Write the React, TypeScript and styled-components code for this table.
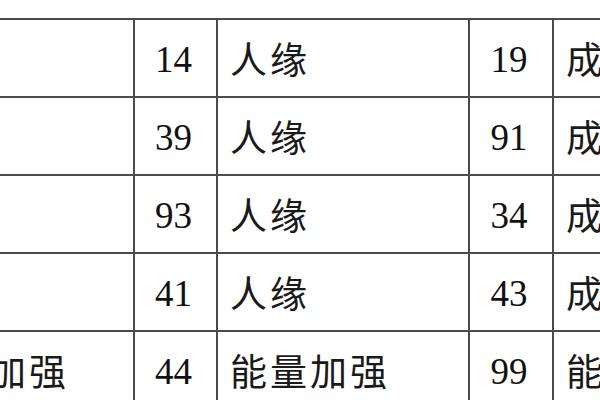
import React from "react";
import styled, { createGlobalStyle } from "styled-components";

const Global = createGlobalStyle`
  html, body {
    margin: 0;
    padding: 0;
    background: #ffffff;
    overflow: hidden;
    width: 600px;
    height: 400px;
  }
`;

const Page = styled.div`
  width: 600px;
  height: 400px;
  overflow: hidden;
  background: #ffffff;
  padding-top: 18px;
  box-sizing: border-box;
`;

const Table = styled.table`
  border-collapse: collapse;
  margin-left: -111px;
  table-layout: fixed;
`;

const Cell = styled.td<{ $w: number; $num?: boolean; $lead?: boolean }>`
  width: ${(p) => p.$w}px;
  min-width: ${(p) => p.$w}px;
  max-width: ${(p) => p.$w}px;
  height: 74px;
  border: 2px solid #4a4a4a;
  padding: ${(p) => (p.$num ? "2px 4px 0 0" : p.$lead ? "0 0 0 18px" : "0 0 0 12px")};
  box-sizing: border-box;
  text-align: ${(p) => (p.$num ? "center" : "left")};
  vertical-align: middle;
  white-space: nowrap;
  overflow: hidden;
  color: ${(p) => (p.$num ? "#111" : "#1a1a1a")};
  font-family: ${(p) =>
    p.$num
      ? '"Liberation Serif", "Noto Sans CJK SC", serif'
      : '"Noto Sans CJK SC", "Liberation Serif", sans-serif'};
  font-size: 37px;
  line-height: 1;
  letter-spacing: ${(p) => (p.$num ? "0" : "3px")};
`;

const Row = styled.tr`
  height: 78px;
`;

const widths = [244, 83, 252, 84, 252];

const rows: [string, string, string, string, string][] = [
  ["人缘", "14", "人缘", "19", "成功"],
  ["人缘", "39", "人缘", "91", "成功"],
  ["人缘", "93", "人缘", "34", "成功"],
  ["人缘", "41", "人缘", "43", "成功"],
  ["能量加强", "44", "能量加强", "99", "能量加强"],
];

export default function App() {
  return (
    <Page>
      <Global />
      <Table>
        <tbody>
          {rows.map((r, i) => (
            <Row key={i}>
              {r.map((v, j) => (
                <Cell key={j} $w={widths[j]} $num={j % 2 === 1} $lead={j === 0}>
                  {v}
                </Cell>
              ))}
            </Row>
          ))}
        </tbody>
      </Table>
    </Page>
  );
}
